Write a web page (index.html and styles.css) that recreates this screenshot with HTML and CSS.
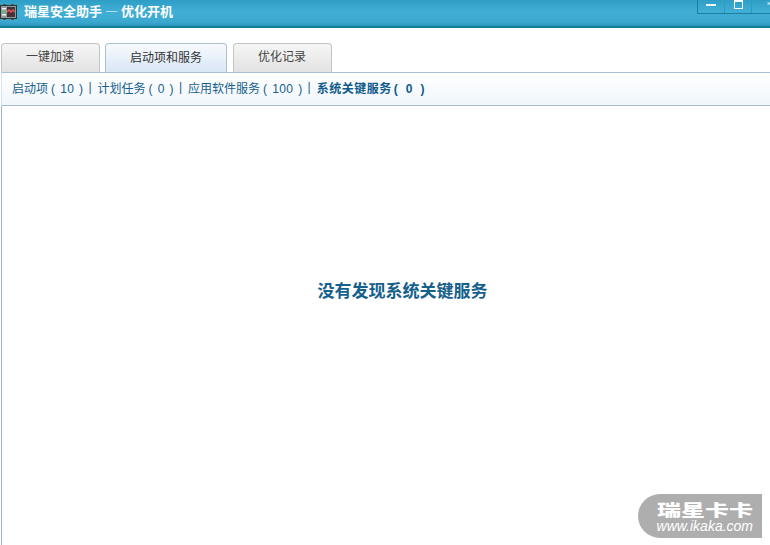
FILE: index.html
```html
<!DOCTYPE html>
<html lang="zh-CN">
<head>
<meta charset="utf-8">
<title>瑞星安全助手 — 优化开机</title>
<link rel="stylesheet" href="styles.css">
</head>
<body>
<div class="window">
  <header class="titlebar">
    <svg class="appicon" width="17" height="16" viewBox="0 0 17 16">
      <path d="M3 0.5h3M11 0.5h3M3 15.5h3M11 15.5h3" stroke="#555" stroke-width="1"/>
      <rect x="0.5" y="1.5" width="16" height="13" fill="#8e9aa0" stroke="#2c3436"/>
      <rect x="2" y="4" width="4" height="1.5" fill="#eef4ee"/>
      <rect x="2" y="7" width="4" height="1.5" fill="#59c96b"/>
      <rect x="2" y="10" width="4" height="1.5" fill="#eef4ee"/>
      <rect x="7" y="3" width="8" height="10" fill="#4a3136"/>
      <path d="M7 8l2-2 2 2 2-2 2 2" fill="none" stroke="#e8565a" stroke-width="1.4"/>
    </svg>
    <span class="title">瑞星安全助手 — 优化开机</span>
    <div class="winbtns">
      <span class="winbtn"><i class="min"></i></span>
      <span class="winbtn"><i class="max"></i></span>
      <span class="winbtn last"><svg width="8" height="8" viewBox="0 0 8 8"><path d="M1 0l6 6M7 0L1 6" stroke="#fff" stroke-width="1.6"/></svg></span>
    </div>
  </header>
  <nav class="tabs">
    <a class="tab">一键加速</a>
    <a class="tab active">启动项和服务</a>
    <a class="tab">优化记录</a>
  </nav>
  <div class="subnav">
    <a>启动项<span class="count">( 10 )</span></a><span class="sep">|</span>
    <a>计划任务<span class="count">( 0 )</span></a><span class="sep">|</span>
    <a>应用软件服务<span class="count">( 100 )</span></a><span class="sep">|</span>
    <a class="current">系统关键服务<span class="count">( 0 )</span></a>
  </div>
  <main class="content">
    <p class="empty">没有发现系统关键服务</p>
  </main>
  <div class="watermark">
    <span class="wm-cn">瑞星卡卡</span>
    <span class="wm-en">www.ikaka.com</span>
  </div>
</div>
</body>
</html>
```

FILE: styles.css
```css
* { box-sizing: border-box; }
html, body { margin: 0; padding: 0; height: 100%; overflow: hidden; background: #fff; }
body { font-family: "Noto Sans CJK SC", "Liberation Sans", sans-serif; font-size: 12px; }
.window { position: relative; width: 770px; height: 545px; display: flex; flex-direction: column; overflow: hidden; }
.titlebar {
  height: 28px; flex: none; display: flex; align-items: center; padding: 0 0 6px 0; position: relative;
  background: linear-gradient(#2e9ec6, #41aed5 45%, #3ba8d0 85%, #2b95bd);
  border-bottom: 2px solid #0f7f96;
}
.appicon { flex: none; margin-top: 4px; }
.title { margin-left: 7px; margin-top: 1px; color: #fff; font-size: 13px; font-weight: 700; line-height: 16px; white-space: nowrap; }
.winbtns {
  position: absolute; right: 0; top: 0; width: 73px; height: 14px; display: flex;
  border-left: 1px solid #1c7f9f; border-bottom: 1px solid #1c7f9f;
}
.winbtn { width: 27px; height: 13px; flex: none; display: flex; justify-content: center; align-items: flex-start; border-right: 1px solid #2b9dbb; }
.winbtn.last { border-right: 0; width: 19px; justify-content: flex-start; padding-left: 15px; }
.winbtn .min { display: block; width: 10px; height: 2px; margin-top: 4px; background: #e8f6fb; }
.winbtn .max { display: block; width: 9px; height: 9px; border: 1px solid #fff; border-top-width: 2px; }
.tabs { flex: none; height: 44px; padding: 15px 0 0 1px; display: flex; gap: 5px; align-items: flex-end; }
.tab {
  height: 29px; width: 99px; display: flex; align-items: center; justify-content: center; padding: 0 1px 5px 0;
  border: 1px solid #c4c4c4; border-bottom: 0; border-radius: 4px 4px 0 0;
  background: linear-gradient(#f6f6f6, #e2e2e2); color: #444; font-size: 12px;
}
.tab.active {
  width: 122px; margin: 0 1px -1px 0; height: 30px; padding-right: 0;
  border-color: #a8c0d4; background: linear-gradient(#f7fafd, #d8e6f5); color: #333;
}
.subnav {
  flex: none; height: 34px; display: flex; align-items: center; padding: 0 0 4px 10px; color: #15608c;
  font-size: 12px; white-space: nowrap;
  border-top: 1px solid #a9bfd2; border-bottom: 1px solid #a5bdc9; border-left: 1px solid #d7e4ee; margin-left: 1px;
  background: linear-gradient(#ffffff, #f0f6fc);
}
.subnav .count { margin-left: 3px; font-family: "Liberation Sans", sans-serif; letter-spacing: 0.4px; word-spacing: 1px; }
.subnav .sep { margin: 0 6px 0 5px; font-family: "Liberation Sans", sans-serif; }
.subnav .current { font-weight: 700; color: #0f5a8c; letter-spacing: 0.5px; }
.subnav .current .count { margin-left: 2px; letter-spacing: 1.6px; word-spacing: 1.5px; }
.content { flex: 1; display: flex; justify-content: center; align-items: flex-start; border-left: 1px solid #9fb8c6; margin-left: 1px; padding-left: 33px; }
.empty { margin: 172px 0 0 0; color: #15608c; font-size: 17px; line-height: 24px; font-weight: 700; }
.watermark {
  position: absolute; left: 638px; top: 494px; width: 124px; height: 44px;
  background: #aeaeae; border-radius: 22px 0 0 22px; color: #fff;
  display: flex; flex-direction: column; align-items: flex-end; padding: 7px 9px 0 0;
}
.wm-cn { font-size: 16px; line-height: 16px; font-weight: 900; transform: scaleX(1.5); transform-origin: right center; }
.wm-en { margin-top: 2px; font-family: "Liberation Sans", sans-serif; font-style: italic; font-size: 14px; line-height: 14px; }
```
